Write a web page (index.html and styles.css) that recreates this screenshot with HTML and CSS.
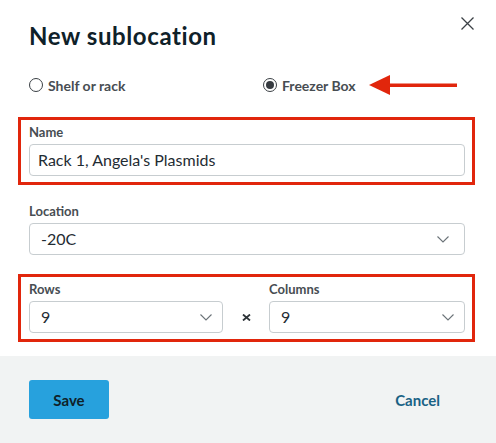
FILE: index.html
```html
<!DOCTYPE html>
<html lang="en">
<head>
<meta charset="utf-8">
<link rel="stylesheet" href="styles.css">
</head>
<body>
<div class="modal">
  <div class="body">
    <div class="header">
      <h1 class="title">New sublocation</h1>
      <button class="close" aria-label="Close">
        <svg width="13" height="13" viewBox="0 0 13 13"><path d="M0.5 0.5 L12.5 12.5 M12.5 0.5 L0.5 12.5" stroke="#3b4146" stroke-width="1.3" fill="none"/></svg>
      </button>
    </div>
    <div class="radios">
      <label class="radio radio-first"><span class="dot"></span>Shelf or rack</label>
      <label class="radio"><span class="dot checked"></span>Freezer Box</label>
      <svg class="arrow" width="90" height="22" viewBox="0 0 90 22"><polygon points="0,11 21,1 21,21" fill="#e1260c"/><rect x="20" y="9.5" width="68" height="3.5" fill="#e1260c"/></svg>
    </div>
    <div class="group highlight first">
      <div class="label">Name</div>
      <div class="input">Rack 1, Angela's Plasmids</div>
    </div>
    <div class="group">
      <div class="label">Location</div>
      <div class="input select wide">-20C<svg class="chev" width="12" height="7" viewBox="0 0 12 7"><path d="M0.5 0.5 L6 6 L11.5 0.5" stroke="#6b7378" stroke-width="1.1" fill="none"/></svg></div>
    </div>
    <div class="group highlight dims">
      <div class="dim">
        <div class="label">Rows</div>
        <div class="input select">9<svg class="chev" width="12" height="7" viewBox="0 0 12 7"><path d="M0.5 0.5 L6 6 L11.5 0.5" stroke="#6b7378" stroke-width="1.1" fill="none"/></svg></div>
      </div>
      <div class="times"><svg width="9" height="7" viewBox="0 0 9 7"><path d="M1 0.5 L8 6.5 M8 0.5 L1 6.5" stroke="#2e3439" stroke-width="1.8" fill="none"/></svg></div>
      <div class="dim">
        <div class="label">Columns</div>
        <div class="input select">9<svg class="chev" width="12" height="7" viewBox="0 0 12 7"><path d="M0.5 0.5 L6 6 L11.5 0.5" stroke="#6b7378" stroke-width="1.1" fill="none"/></svg></div>
      </div>
    </div>
  </div>
  <div class="footer">
    <button class="save">Save</button>
    <button class="cancel">Cancel</button>
  </div>
</div>
</body>
</html>
```
FILE: styles.css
```css
* { box-sizing: border-box; }
html, body { margin: 0; padding: 0; background: #fff; }
body { font-family: "Lato", "Open Sans", sans-serif; color: #1f2c33; }
.modal { width: 496px; height: 443px; display: flex; flex-direction: column; }
.body { padding: 0 21px 0 18px; height: 356px; }
.header { display: flex; justify-content: space-between; align-items: flex-start; padding-left: 11px; }
.title { margin: 22px 0 0; font-size: 24px; font-weight: 700; color: #0f2129; letter-spacing: 0.6px; line-height: 28px; }
.close { margin: 17px 1px 0 0; padding: 0; border: 0; background: none; width: 13px; height: 13px; display: block; }
.close svg { display: block; }
.radios { position: relative; display: flex; align-items: center; padding-left: 11px; margin-top: 27px; height: 16px; }
.radio { display: flex; align-items: center; gap: 5px; font-size: 14px; font-weight: 700; color: #474d52; }
.radio-first { width: 234px; }
.dot { width: 14px; height: 14px; border: 1px solid #3a3f44; border-radius: 50%; display: inline-flex; align-items: center; justify-content: center; }
.dot.checked::after { content: ""; width: 8px; height: 8px; border-radius: 50%; background: #363b40; }
.arrow { position: absolute; left: 351px; top: -3px; }
.group { border: 3px solid transparent; padding: 4px 7px 6px 8px; margin-top: 10px; }
.group.first { margin-top: 24px; }
.group.first + .group { margin-top: 11px; }
.highlight { border-color: #e1260c; }
.label { font-size: 13px; font-weight: 700; color: #474d52; line-height: 16px; margin-bottom: 4px; }
.input { height: 32px; border: 1px solid #c7cdd0; border-radius: 4px; padding: 0 9px 0 8px; font-size: 16px; line-height: 30px; color: #1f2c33; display: flex; align-items: center; justify-content: space-between; }
.select { padding: 0 10px 0 11px; }
.select.wide { padding-right: 15px; }
.chev { display: block; }
.dims { display: flex; align-items: flex-end; }
.dim { flex: 1; }
.dim:first-child { flex: 0 0 194px; }
.times { width: 46px; height: 32px; display: flex; align-items: center; justify-content: center; }
.times svg { display: block; }
.footer { flex: 1; background: #f1f3f3; display: flex; justify-content: space-between; align-items: flex-start; padding: 24px 56px 0 29px; }
.save { width: 80px; height: 39px; border: 0; border-radius: 3px; background: #27a1dd; color: #0f2129; font-family: inherit; font-size: 15px; font-weight: 700; padding: 0; }
.cancel { border: 0; background: none; color: #1a6285; font-family: inherit; font-size: 15px; font-weight: 700; padding: 0; height: 39px; }
```
